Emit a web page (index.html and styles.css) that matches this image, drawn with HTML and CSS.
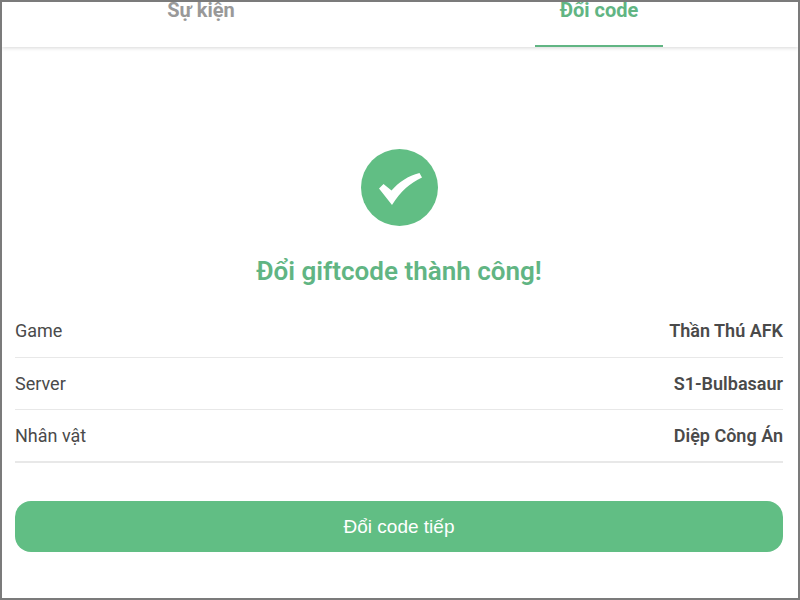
FILE: index.html
```html
<!DOCTYPE html>
<html lang="vi">
<head>
  <meta charset="UTF-8" />
  <meta name="viewport" content="width=device-width, initial-scale=1" />
  <title>Đổi code</title>
  <link rel="stylesheet" href="styles.css">
</head>
<body>
  <div class="page">
    <nav class="tabs">
      <a href="#" class="tab">Sự kiện</a>
      <a href="#" class="tab active">Đổi code</a>
    </nav>

    <main class="content">
      <svg class="success-icon" viewBox="0 0 77 77" aria-hidden="true">
        <circle cx="38.5" cy="38.5" r="38.5" fill="#61be84" />
        <path d="M18 39.500 L22.500 35 L30.500 41.500 C38 33 47 27 58.500 24 L61 28.500 C49 34 40 42 31 56 Z" fill="#fff" />
      </svg>
      <h1>Đổi giftcode thành công!</h1>

      <table class="info">
        <tbody>
          <tr>
            <th scope="row">Game</th>
            <td>Thần Thú AFK</td>
          </tr>
          <tr>
            <th scope="row">Server</th>
            <td>S1-Bulbasaur</td>
          </tr>
          <tr>
            <th scope="row">Nhân vật</th>
            <td>Diệp Công Án</td>
          </tr>
        </tbody>
      </table>

      <button type="button" class="btn-primary">Đổi code tiếp</button>
    </main>
  </div>
</body>
</html>
```

FILE: styles.css
```css
* {
  box-sizing: border-box;
  margin: 0;
  padding: 0;
}
body {
  font-family: Roboto, Arial, sans-serif;
  color: #4a4a4a;
  background: #fff;
}
.page {
  min-height: 100vh;
  border: 2px solid #7b7b7b;
  overflow: hidden;
}
.tabs {
  display: flex;
  box-shadow: 0 1px 4px rgba(0, 0, 0, 0.16);
}
.tab {
  flex: 1;
  display: flex;
  flex-direction: column;
  align-items: center;
  gap: 27px;
  color: #999;
  font-size: 20px;
  font-weight: bold;
  line-height: 16px;
  text-decoration: none;
}
.tab::after {
  content: "";
  width: 128px;
  height: 2px;
}
.tab.active {
  color: #61b583;
}
.tab.active::after {
  background: #61b583;
}
.content {
  display: flex;
  flex-direction: column;
  align-items: center;
  padding: 102px 15px 46px 13px;
}
.success-icon {
  width: 77px;
  height: 77px;
}
h1 {
  margin: 29px 0 18px;
  color: #61b583;
  font-size: 26px;
  font-weight: 600;
  line-height: 32px;
}
.info {
  width: 100%;
  border-collapse: separate;
  border-spacing: 0;
  font-size: 18px;
  line-height: 20px;
}
.info th,
.info td {
  padding: 16px 0 15px;
  border-bottom: 1px solid #e8e8e8;
}
.info th {
  font-weight: normal;
  text-align: left;
}
.info td {
  font-weight: 600;
  text-align: right;
}
.info tr:first-child th,
.info tr:first-child td {
  padding-bottom: 16px;
}
.info tr:last-child th,
.info tr:last-child td {
  border-bottom: 2px solid #e8e8e8;
}
.btn-primary {
  width: 100%;
  margin-top: 38px;
  padding: 14px;
  border: none;
  border-radius: 16px;
  background: #61be84;
  color: #fff;
  font-family: "Liberation Sans", Arial, sans-serif;
  font-size: 19px;
  line-height: 23px;
  cursor: pointer;
}
```
